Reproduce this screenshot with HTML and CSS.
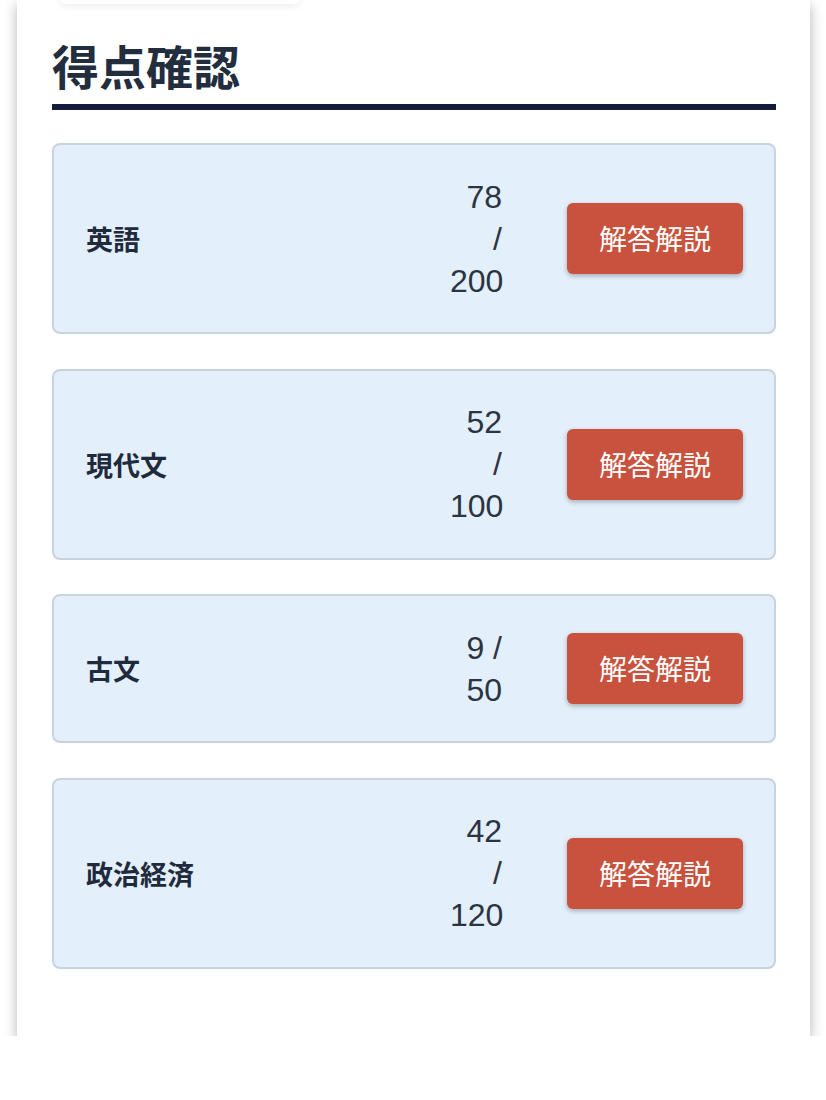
FILE: index.html
```html
<!DOCTYPE html>
<html lang="ja">
<head>
  <meta charset="UTF-8">
  <meta name="viewport" content="width=device-width, initial-scale=1.0">
  <title>得点確認</title>
  <link rel="stylesheet" href="styles.css">
</head>
<body>
  <div class="panel">
    <div class="prev-block"></div>

    <h1>得点確認</h1>

    <div class="score-card">
      <p class="subject">英語</p>
      <p class="score">78 / 200</p>
      <button class="btn-answer">解答解説</button>
    </div>

    <div class="score-card">
      <p class="subject">現代文</p>
      <p class="score">52 / 100</p>
      <button class="btn-answer">解答解説</button>
    </div>

    <div class="score-card">
      <p class="subject">古文</p>
      <p class="score">9 / 50</p>
      <button class="btn-answer">解答解説</button>
    </div>

    <div class="score-card">
      <p class="subject">政治経済</p>
      <p class="score">42 / 120</p>
      <button class="btn-answer">解答解説</button>
    </div>
  </div>
</body>
</html>
```

FILE: styles.css
```css
body {
  margin: 0;
  background: #fff;
  font-family: 'Liberation Sans', 'Noto Sans CJK JP', sans-serif;
  color: #1f2a3c;
}

.panel {
  display: flow-root;
  margin: 0 16px 0 17px;
  padding: 0 34px 32.5px 35px;
  background: #fff;
  box-shadow: 0 5px 12px rgba(0, 0, 0, 0.3);
}

/* bottom edge of the block above, scrolled out of view */
.prev-block {
  width: 240px;
  height: 56px;
  margin: -52px 0 0 8px;
  background: #fff;
  border-radius: 6px;
  box-shadow: 0 2px 8px rgba(0, 0, 0, 0.08);
}

h1 {
  margin: 31px 0 33px;
  padding-bottom: 9px;
  font-family: 'Noto Sans CJK JP', sans-serif;
  font-size: 47px;
  font-weight: 700;
  line-height: 60px;
  color: #222d3e;
  border-bottom: 6px solid #141c3a;
}

.score-card {
  display: grid;
  grid-template-columns: 1fr 52px auto;
  column-gap: 65px;
  align-items: center;
  margin-bottom: 34.5px;
  padding: 30.5px 31px 30.5px 32px;
  background: #e3effa;
  border: 2px solid #c9d3df;
  border-radius: 8px;
}

.subject {
  margin: 0;
  font-family: 'Noto Sans CJK JP', sans-serif;
  font-size: 27px;
  font-weight: 700;
  color: #1f2a3c;
}

.score {
  margin: 0;
  font-size: 32px;
  line-height: 42px;
  text-align: right;
  color: #2b3443;
}

.btn-answer {
  padding: 14px 32px;
  font-family: 'Noto Sans CJK JP', sans-serif;
  font-size: 28px;
  line-height: 43px;
  color: #fff;
  background: #c8523d;
  border: none;
  border-radius: 6px;
  box-shadow: 0 2px 5px rgba(0, 0, 0, 0.28);
}
```
